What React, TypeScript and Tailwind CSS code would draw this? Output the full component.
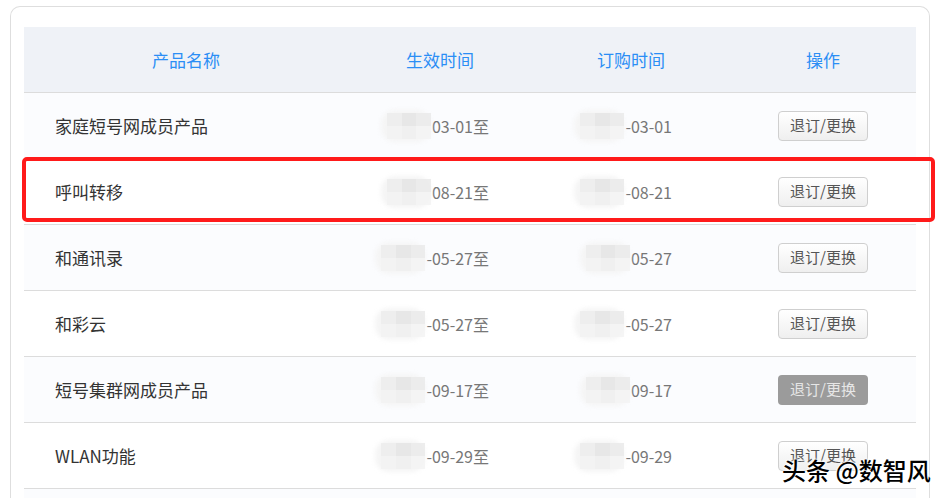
import React from 'react';

type Row = {
  name: string;
  start: string;
  order: string;
  disabled?: boolean;
};

const rows: Row[] = [
  { name: '家庭短号网成员产品', start: '03-01至', order: '-03-01' },
  { name: '呼叫转移', start: '08-21至', order: '-08-21' },
  { name: '和通讯录', start: '-05-27至', order: '05-27' },
  { name: '和彩云', start: '-05-27至', order: '-05-27' },
  { name: '短号集群网成员产品', start: '-09-17至', order: '09-17', disabled: true },
  { name: 'WLAN功能', start: '-09-29至', order: '-09-29' },
];

// mosaic patch standing in for the redacted year
const Redacted = () => (
  <div className="relative w-[50px] h-[32px] mr-[1px]">
    <div className="absolute inset-0 rounded-[14px] bg-[#f5f5f5] blur-[2px]" />
    <div className="absolute left-[6px] top-[3px] grid grid-cols-3 grid-rows-2 w-[44px] h-[26px] opacity-80">
      <div className="bg-[#ededed]" />
      <div className="bg-[#e4e4e4]" />
      <div className="bg-[#eaeaea]" />
      <div className="bg-[#f3f3f3]" />
      <div className="bg-[#efefef]" />
      <div className="bg-[#f4f4f4]" />
    </div>
  </div>
);

const ActionButton = ({ disabled }: { disabled?: boolean }) =>
  disabled ? (
    <button className="w-[90px] h-[30px] rounded-[4px] bg-[#9b9b9b] text-[15px] text-[#e6e6e6]">
      退订/更换
    </button>
  ) : (
    <button className="w-[90px] h-[30px] rounded-[4px] border border-[#cfcfcf] bg-gradient-to-b from-white to-[#efefef] text-[15px] text-[#555]">
      退订/更换
    </button>
  );

export default function App() {
  return (
    <div className="relative w-[944px] h-[498px] overflow-hidden bg-white font-['Noto_Sans_CJK_SC','Noto_Sans',sans-serif]">
      <div className="ml-[10px] mt-[6px] w-[920px] h-[520px] rounded-t-[10px] border border-b-0 border-[#dedede] pt-[20px] pl-[13px]">
        <div className="w-[892px]">
          {/* header */}
          <div className="flex h-[66px] items-center border-b border-[#dcdcdc] bg-[#eff2f7] text-[17px] text-[#2b8ef5]">
            <div className="w-[324px] text-center">产品名称</div>
            <div className="w-[184px] text-center">生效时间</div>
            <div className="w-[198px] text-center">订购时间</div>
            <div className="w-[186px] text-center">操作</div>
          </div>

          {rows.map((r, i) => (
            <div
              key={r.name}
              className={`flex h-[66px] items-center border-b border-[#dcdcdc] ${i % 2 === 0 ? 'bg-[#fbfcfe]' : 'bg-white'}`}
            >
              <div className="w-[324px] pl-[31px] text-[17px] text-[#333]">{r.name}</div>
              <div className="w-[184px] flex items-center justify-end pr-[43px] text-[16px] text-[#777]">
                <Redacted />
                <span>{r.start}</span>
              </div>
              <div className="w-[198px] flex items-center justify-end pr-[58px] text-[16px] text-[#777]">
                <Redacted />
                <span>{r.order}</span>
              </div>
              <div className="w-[186px] flex justify-center">
                <ActionButton disabled={r.disabled} />
              </div>
            </div>
          ))}
          <div className="h-[40px] bg-[#fbfcfe]" />
        </div>
      </div>

      {/* annotation box */}
      <div className="absolute left-[22px] top-[157px] w-[913px] h-[65px] rounded-[5px] border-[4px] border-[#ff1a1a]" />

      {/* watermark */}
      <div className="absolute left-[782px] top-[452px] text-[24px] font-medium text-black [text-shadow:0_0_2px_#fff,0_0_2px_#fff,0_0_3px_#fff,0_0_3px_#fff]">
        头条 @数智风
      </div>
    </div>
  );
}
